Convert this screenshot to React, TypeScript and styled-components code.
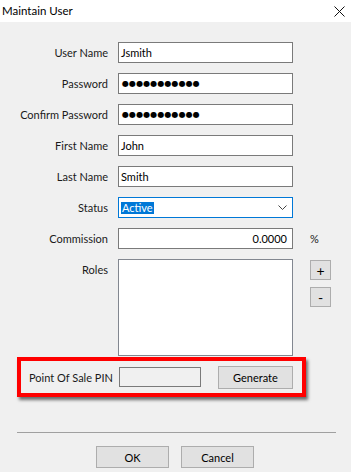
import styled, { createGlobalStyle } from 'styled-components';

const GlobalStyle = createGlobalStyle`
  html, body {
    margin: 0;
    padding: 0;
    background: #f0f0f0;
  }
  body {
    font-family: Lato, "Noto Sans", Arial, sans-serif;
    font-size: 11px;
    color: #000;
  }
`;

const Window = styled.div`
  width: 351px;
  height: 472px;
  background: #f0f0f0;
  display: flex;
  flex-direction: column;
  overflow: hidden;
`;

const TitleBar = styled.div`
  height: 22px;
  background: #fff;
  display: flex;
  align-items: center;
  justify-content: space-between;
  padding: 0 6px 0 2px;
  font-size: 11.5px;
  line-height: 1;
`;

const Form = styled.div`
  display: grid;
  grid-template-columns: 108px 182px 1fr;
  grid-template-rows: repeat(7, 21px) 97px;
  column-gap: 10px;
  row-gap: 10px;
  margin-top: 20px;
`;

const Label = styled.div<{ $top?: boolean }>`
  display: flex;
  justify-content: flex-end;
  align-items: ${(p) => (p.$top ? 'flex-start' : 'center')};
  padding-top: ${(p) => (p.$top ? '4px' : '0')};
  white-space: nowrap;
  color: #1a1a1a;
`;

const Field = styled.div<{ $right?: boolean; $focus?: boolean }>`
  box-sizing: border-box;
  width: 175px;
  height: 21px;
  background: #fff;
  border: 1px solid ${(p) => (p.$focus ? '#0078d7' : '#7a7a7a')};
  display: flex;
  align-items: center;
  justify-content: ${(p) => (p.$right ? 'flex-end' : 'space-between')};
  padding: 0 5px 0 2px;
  white-space: nowrap;
`;

const Dots = styled.span`
  font-family: "DejaVu Sans", sans-serif;
  font-size: 8px;
  letter-spacing: 0.1px;
  padding-left: 1px;
`;

const Selected = styled.span`
  background: #0078d7;
  color: #fff;
  padding: 0 1px;
  line-height: 12px;
`;

const ListBox = styled.div`
  box-sizing: border-box;
  width: 175px;
  height: 97px;
  background: #fff;
  border: 1px solid #828790;
`;

const Side = styled.div`
  display: flex;
  align-items: center;
  color: #1a1a1a;
`;

const SideButtons = styled.div`
  display: flex;
  flex-direction: column;
  gap: 7px;
  padding-top: 1px;
`;

const SmallButton = styled.div`
  box-sizing: border-box;
  width: 21px;
  height: 20px;
  background: #e1e1e1;
  border: 1px solid #adadad;
  display: flex;
  align-items: center;
  justify-content: center;
  font-size: 14px;
`;

const Highlight = styled.div`
  box-sizing: border-box;
  width: 289px;
  height: 40px;
  margin: 1px 0 0 17px;
  border: 4px solid #ff0000;
  box-shadow: 2px 3px 3px rgba(0, 0, 0, 0.55);
  display: flex;
  align-items: center;
  padding-left: 8px;
`;

const PinLabel = styled.div`
  flex: 0 0 83px;
  display: flex;
  justify-content: flex-end;
  white-space: nowrap;
  color: #1a1a1a;
`;

const PinField = styled.div`
  box-sizing: border-box;
  width: 82px;
  height: 20px;
  margin-left: 6px;
  border: 1px solid #7a7a7a;
  background: #f0f0f0;
`;

const Button = styled.div<{ $w: number }>`
  box-sizing: border-box;
  width: ${(p) => p.$w}px;
  height: 22px;
  background: #e1e1e1;
  border: 1px solid #adadad;
  display: flex;
  align-items: center;
  justify-content: center;
`;

const GenerateButton = styled(Button)`
  height: 23px;
  margin-left: 17px;
`;

const Separator = styled.div`
  height: 1px;
  background: #a0a0a0;
  margin: 35px 15px 0 17px;
`;

const Footer = styled.div`
  display: flex;
  justify-content: center;
  gap: 12px;
  margin-top: 13px;
  padding-right: 1px;
`;

const Chevron = () => (
  <svg width="9" height="5" viewBox="0 0 9 5">
    <path d="M0.5 0.5 L4.5 4.5 L8.5 0.5" fill="none" stroke="#444" strokeWidth="1" />
  </svg>
);

const CloseIcon = () => (
  <svg width="11" height="11" viewBox="0 0 11 11">
    <path d="M0.5 0.5 L10.5 10.5 M10.5 0.5 L0.5 10.5" stroke="#111" strokeWidth="1" />
  </svg>
);

const textRows = [
  { label: 'User Name', value: 'Jsmith' },
  { label: 'Password', value: '●●●●●●●●●●●', secret: true },
  { label: 'Confirm Password', value: '●●●●●●●●●●●', secret: true },
  { label: 'First Name', value: 'John' },
  { label: 'Last Name', value: 'Smith' },
];

export default function App() {
  return (
    <Window>
      <GlobalStyle />
      <TitleBar>
        <span>Maintain User</span>
        <CloseIcon />
      </TitleBar>
      <Form>
        {textRows.map((r) => [
          <Label key={r.label + 'l'}>{r.label}</Label>,
          <Field key={r.label + 'f'}>
            {r.secret ? <Dots>{r.value}</Dots> : <span>{r.value}</span>}
          </Field>,
          <div key={r.label + 's'} />,
        ])}
        <Label>Status</Label>
        <Field $focus>
          <Selected>Active</Selected>
          <Chevron />
        </Field>
        <div />
        <Label>Commission</Label>
        <Field $right>0.0000</Field>
        <Side>%</Side>
        <Label $top>Roles</Label>
        <ListBox />
        <SideButtons>
          <SmallButton>+</SmallButton>
          <SmallButton>-</SmallButton>
        </SideButtons>
      </Form>
      <Highlight>
        <PinLabel>Point Of Sale PIN</PinLabel>
        <PinField />
        <GenerateButton $w={75}>Generate</GenerateButton>
      </Highlight>
      <Separator />
      <Footer>
        <Button $w={73}>OK</Button>
        <Button $w={73}>Cancel</Button>
      </Footer>
    </Window>
  );
}
